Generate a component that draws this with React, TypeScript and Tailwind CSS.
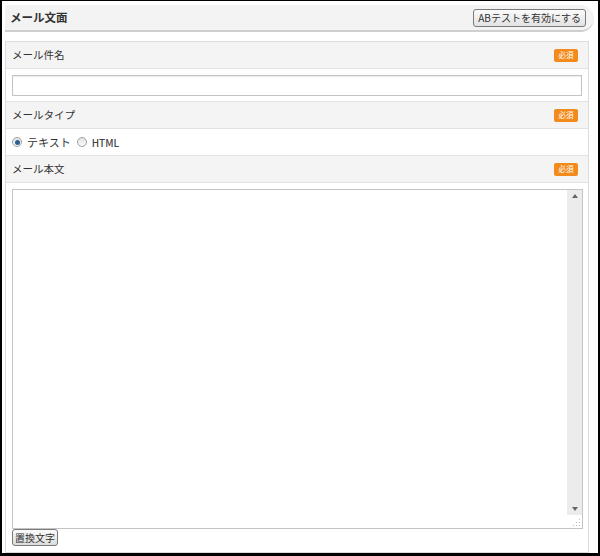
const font = { fontFamily: '"Noto Sans CJK JP", "Noto Sans", sans-serif' };

const Badge = () => (
  <span className="inline-flex h-[13px] w-[24px] items-center justify-center rounded-[2px] bg-[#f28a1c] text-[7.5px] leading-none text-white">
    必須
  </span>
);

const LabelRow = ({ label }: { label: string }) => (
  <div className="flex h-[27px] items-center justify-between border-b border-[#e2e2e2] bg-[#f4f4f4] pl-[6px] pr-[10px] text-[10.5px] text-[#333]">
    <span>{label}</span>
    <Badge />
  </div>
);

const Radio = ({ checked }: { checked?: boolean }) => (
  <span className="flex h-[10px] w-[10px] items-center justify-center rounded-full border border-[#a0a0a0] bg-gradient-to-b from-[#e4e4e4] to-[#fafafa]">
    {checked && <span className="h-[5px] w-[5px] rounded-full bg-[#2f5f8f]" />}
  </span>
);

export default function App() {
  return (
    <div
      style={font}
      className="flex h-[556px] w-[600px] flex-col border-b-[3px] border-l-2 border-r-2 border-t border-black bg-white pl-[3px] pt-[4px]"
    >
      <div className="flex h-[27px] w-[589px] items-center justify-between rounded-r-[14px] border-b-2 border-[#cfcfcf] bg-[#f3f3f3] pl-[5px] pr-[8px]">
        <span className="text-[11.5px] font-bold text-[#333]">メール文面</span>
        <button className="h-[18px] rounded-[3px] border border-[#7a7a7a] bg-gradient-to-b from-[#fbfbfb] to-[#e2e2e2] px-[4px] text-[10px] leading-none text-[#333]">
          ABテストを有効にする
        </button>
      </div>

      <div className="mt-[9px] flex w-[584px] flex-col border border-[#dcdcdc]">
        <LabelRow label="メール件名" />
        <div className="flex h-[33px] items-center border-b border-[#e2e2e2] pl-[6px] pr-[6px]">
          <input className="h-[21px] w-[570px] border border-[#c4c4c4] bg-white px-1 text-[12px] outline-none shadow-[inset_0_1px_1px_rgba(0,0,0,0.08)]" />
        </div>
        <LabelRow label="メールタイプ" />
        <div className="flex h-[27px] items-center gap-[5px] border-b border-[#e2e2e2] pl-[6px] text-[11px] text-[#333]">
          <Radio checked />
          <span>テキスト</span>
          <span className="ml-[1px]">
            <Radio />
          </span>
          <span className="text-[10px] font-medium text-[#444]">HTML</span>
        </div>
        <LabelRow label="メール本文" />
        <div className="flex flex-col pl-[6px] pt-[6px] pb-[6px]">
          <div className="flex h-[340px] w-[571px] border border-[#c4c4c4] bg-white">
            <textarea className="flex-1 resize-none bg-white p-1 text-[12px] outline-none" />
            <div className="flex w-[15px] flex-col">
              <div className="flex flex-1 flex-col items-center bg-[#ececec]">
                <span className="mt-[4px] h-0 w-0 border-x-[3px] border-b-[4px] border-x-transparent border-b-[#666]" />
                <div className="flex-1" />
                <span className="mb-[4px] h-0 w-0 border-x-[3px] border-t-[4px] border-x-transparent border-t-[#666]" />
              </div>
              <div className="flex h-[13px] items-end justify-end bg-white pb-[1px] pr-[1px]">
                <svg width="8" height="8" viewBox="0 0 8 8">
                  <rect x="6" y="0" width="1" height="1" fill="#bbb" />
                  <rect x="6" y="3" width="1" height="1" fill="#bbb" />
                  <rect x="3" y="3" width="1" height="1" fill="#bbb" />
                  <rect x="6" y="6" width="1" height="1" fill="#bbb" />
                  <rect x="3" y="6" width="1" height="1" fill="#bbb" />
                  <rect x="0" y="6" width="1" height="1" fill="#bbb" />
                </svg>
              </div>
            </div>
          </div>
          <button className="h-[17px] w-[46px] rounded-[3px] border border-[#7a7a7a] bg-gradient-to-b from-[#fbfbfb] to-[#dcdcdc] text-[10px] leading-none text-[#333]">
            置換文字
          </button>
        </div>
      </div>
    </div>
  );
}
